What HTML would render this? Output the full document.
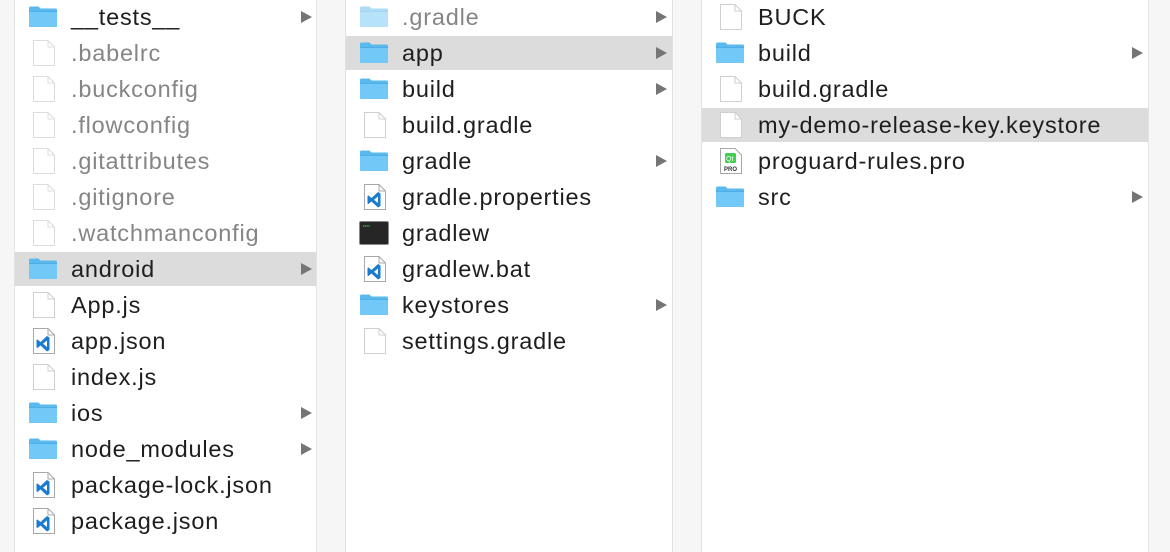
<!DOCTYPE html>
<html><head><meta charset="utf-8"><style>
body{margin:0;width:1170px;height:552px;overflow:hidden;background:#f6f6f6;font-family:"Liberation Sans",Helvetica,Arial,sans-serif;position:relative}
.col{position:absolute;top:0;height:552px;background:#fff;border-left:1px solid #e2e2e2;border-right:1px solid #e2e2e2}
.row{position:absolute;height:34px;left:0;right:0}
.row.sel{background:#dcdcdc}
.t{position:absolute;top:4px;font-size:23.5px;color:#1e1e1e;white-space:nowrap;letter-spacing:0.8px}
.g{color:#858585}
.ic{position:absolute}
.ar{position:absolute;top:11px;width:0;height:0;border-top:6px solid transparent;border-bottom:6px solid transparent;border-left:11px solid #757575}
</style></head><body>
<svg width="0" height="0" style="position:absolute">
<defs>
<symbol id="fold" viewBox="0 0 30 22"><path d="M1 2.5Q1 1 2.5 1H10.5L12.5 3H27.5Q29 3 29 4.5V20.5Q29 21.5 28 21.5H2Q1 21.5 1 20.5Z" fill="#5ab9ee"/><path d="M1 6H29V20.5Q29 21.5 28 21.5H2Q1 21.5 1 20.5Z" fill="#72c8f6"/><path d="M1 6H29" stroke="#4aa7dd" stroke-width="0.8"/></symbol>
<symbol id="file" viewBox="0 0 24 28"><path d="M1.5 1.5H16L22.5 8V26.5H1.5Z" fill="#fff" stroke="#cfcfcf"/><path d="M16 1.5V8H22.5" fill="none" stroke="#cfcfcf"/></symbol>
<symbol id="vs" viewBox="0 0 24 28"><path d="M1.5 1.5H16L22.5 8V26.5H1.5Z" fill="#fff" stroke="#a8a8a8"/><path d="M16 1.5V8H22.5" fill="none" stroke="#a8a8a8"/><path d="M15 9L17.5 10.5V23L15 24.5L8.5 18.5L5.5 21L4.5 20.5V13L5.5 12.5L8.5 15ZM15 13.5L11 16.75L15 20Z" fill="#1a7bd0"/></symbol>
<symbol id="term" viewBox="0 0 30 24"><rect x="0.5" y="0.5" width="29" height="23" rx="1.5" fill="#262626" stroke="#888"/><path d="M4 5H11" stroke="#3bd13b" stroke-width="1.3" stroke-dasharray="1.2 0.6"/></symbol>
<symbol id="pro" viewBox="0 0 24 28"><path d="M1.5 1.5H16L22.5 8V26.5H1.5Z" fill="#fff" stroke="#a8a8a8"/><rect x="6" y="6" width="11" height="10" rx="1.5" fill="#41cd52"/><text x="7" y="14" font-size="7" fill="#fff" font-family="Liberation Sans">Qt</text><text x="5" y="24" font-size="6" font-weight="bold" fill="#333" font-family="Liberation Sans">PRO</text></symbol>
</defs></svg>

<div class="col" style="left:14px;width:301px">
<div class="row" style="top:0"><svg class="ic" style="left:13px;top:5px" width="30" height="23"><use href="#fold"/></svg><span class="t" style="left:56px">__tests__</span><span class="ar" style="left:286px"></span></div>
<div class="row" style="top:36px"><svg class="ic" style="left:17px;top:3px;opacity:.7" width="24" height="28"><use href="#file"/></svg><span class="t g" style="left:56px">.babelrc</span></div>
<div class="row" style="top:72px"><svg class="ic" style="left:17px;top:3px;opacity:.7" width="24" height="28"><use href="#file"/></svg><span class="t g" style="left:56px">.buckconfig</span></div>
<div class="row" style="top:108px"><svg class="ic" style="left:17px;top:3px;opacity:.7" width="24" height="28"><use href="#file"/></svg><span class="t g" style="left:56px">.flowconfig</span></div>
<div class="row" style="top:144px"><svg class="ic" style="left:17px;top:3px;opacity:.7" width="24" height="28"><use href="#file"/></svg><span class="t g" style="left:56px">.gitattributes</span></div>
<div class="row" style="top:180px"><svg class="ic" style="left:17px;top:3px;opacity:.7" width="24" height="28"><use href="#file"/></svg><span class="t g" style="left:56px">.gitignore</span></div>
<div class="row" style="top:216px"><svg class="ic" style="left:17px;top:3px;opacity:.7" width="24" height="28"><use href="#file"/></svg><span class="t g" style="left:56px">.watchmanconfig</span></div>
<div class="row sel" style="top:252px"><svg class="ic" style="left:13px;top:5px" width="30" height="23"><use href="#fold"/></svg><span class="t" style="left:56px">android</span><span class="ar" style="left:286px"></span></div>
<div class="row" style="top:288px"><svg class="ic" style="left:17px;top:3px" width="24" height="28"><use href="#file"/></svg><span class="t" style="left:56px">App.js</span></div>
<div class="row" style="top:324px"><svg class="ic" style="left:17px;top:3px" width="24" height="28"><use href="#vs"/></svg><span class="t" style="left:56px">app.json</span></div>
<div class="row" style="top:360px"><svg class="ic" style="left:17px;top:3px" width="24" height="28"><use href="#file"/></svg><span class="t" style="left:56px">index.js</span></div>
<div class="row" style="top:396px"><svg class="ic" style="left:13px;top:5px" width="30" height="23"><use href="#fold"/></svg><span class="t" style="left:56px">ios</span><span class="ar" style="left:286px"></span></div>
<div class="row" style="top:432px"><svg class="ic" style="left:13px;top:5px" width="30" height="23"><use href="#fold"/></svg><span class="t" style="left:56px">node_modules</span><span class="ar" style="left:286px"></span></div>
<div class="row" style="top:468px"><svg class="ic" style="left:17px;top:3px" width="24" height="28"><use href="#vs"/></svg><span class="t" style="left:56px">package-lock.json</span></div>
<div class="row" style="top:504px"><svg class="ic" style="left:17px;top:3px" width="24" height="28"><use href="#vs"/></svg><span class="t" style="left:56px">package.json</span></div>
</div>

<div class="col" style="left:345px;width:326px">
<div class="row" style="top:0"><svg class="ic" style="left:13px;top:5px;opacity:.5" width="30" height="23"><use href="#fold"/></svg><span class="t g" style="left:56px">.gradle</span><span class="ar" style="left:310px"></span></div>
<div class="row sel" style="top:36px"><svg class="ic" style="left:13px;top:5px" width="30" height="23"><use href="#fold"/></svg><span class="t" style="left:56px">app</span><span class="ar" style="left:310px"></span></div>
<div class="row" style="top:72px"><svg class="ic" style="left:13px;top:5px" width="30" height="23"><use href="#fold"/></svg><span class="t" style="left:56px">build</span><span class="ar" style="left:310px"></span></div>
<div class="row" style="top:108px"><svg class="ic" style="left:17px;top:3px" width="24" height="28"><use href="#file"/></svg><span class="t" style="left:56px">build.gradle</span></div>
<div class="row" style="top:144px"><svg class="ic" style="left:13px;top:5px" width="30" height="23"><use href="#fold"/></svg><span class="t" style="left:56px">gradle</span><span class="ar" style="left:310px"></span></div>
<div class="row" style="top:180px"><svg class="ic" style="left:17px;top:3px" width="24" height="28"><use href="#vs"/></svg><span class="t" style="left:56px">gradle.properties</span></div>
<div class="row" style="top:216px"><svg class="ic" style="left:13px;top:5px" width="30" height="24"><use href="#term"/></svg><span class="t" style="left:56px">gradlew</span></div>
<div class="row" style="top:252px"><svg class="ic" style="left:17px;top:3px" width="24" height="28"><use href="#vs"/></svg><span class="t" style="left:56px">gradlew.bat</span></div>
<div class="row" style="top:288px"><svg class="ic" style="left:13px;top:5px" width="30" height="23"><use href="#fold"/></svg><span class="t" style="left:56px">keystores</span><span class="ar" style="left:310px"></span></div>
<div class="row" style="top:324px"><svg class="ic" style="left:17px;top:3px" width="24" height="28"><use href="#file"/></svg><span class="t" style="left:56px">settings.gradle</span></div>
</div>

<div class="col" style="left:701px;width:446px">
<div class="row" style="top:0"><svg class="ic" style="left:17px;top:3px" width="24" height="28"><use href="#file"/></svg><span class="t" style="left:56px">BUCK</span></div>
<div class="row" style="top:36px"><svg class="ic" style="left:13px;top:5px" width="30" height="23"><use href="#fold"/></svg><span class="t" style="left:56px">build</span><span class="ar" style="left:430px"></span></div>
<div class="row" style="top:72px"><svg class="ic" style="left:17px;top:3px" width="24" height="28"><use href="#file"/></svg><span class="t" style="left:56px">build.gradle</span></div>
<div class="row sel" style="top:108px"><svg class="ic" style="left:17px;top:3px" width="24" height="28"><use href="#file"/></svg><span class="t" style="left:56px">my-demo-release-key.keystore</span></div>
<div class="row" style="top:144px"><svg class="ic" style="left:17px;top:3px" width="24" height="28"><use href="#pro"/></svg><span class="t" style="left:56px">proguard-rules.pro</span></div>
<div class="row" style="top:180px"><svg class="ic" style="left:13px;top:5px" width="30" height="23"><use href="#fold"/></svg><span class="t" style="left:56px">src</span><span class="ar" style="left:430px"></span></div>
</div>
</body></html>
